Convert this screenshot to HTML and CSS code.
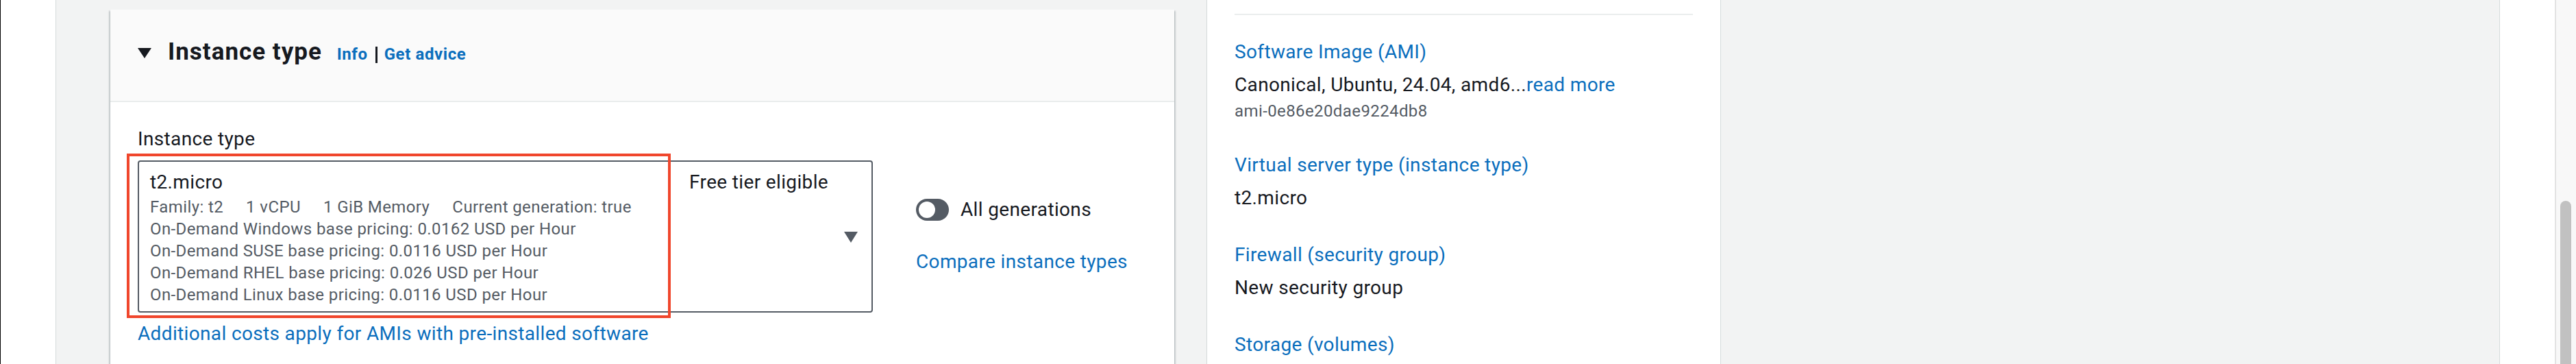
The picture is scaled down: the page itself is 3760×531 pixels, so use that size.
FILE: index.html
```html
<!DOCTYPE html>
<html lang="en">
<head>
    <meta charset="UTF-8">
    <title>Launch an instance - Instance type</title>
    <link rel="stylesheet" href="styles.css">
</head>
<body>
    <div class="frame">
        <aside class="nav-rail"></aside>

        <main class="main">
            <section class="card">
                <header class="card-header">
                    <svg class="caret" width="20" height="15" viewBox="0 0 20 15"><path d="M0 0 H20 L10 15 Z" fill="#16191f"/></svg>
                    <h2 class="card-title">Instance type <span class="title-links"><a class="info-link">Info</a><span class="sep"></span><a class="info-link">Get advice</a></span></h2>
                </header>

                <div class="card-body">
                    <div class="field-row">
                        <div class="field">
                            <label class="field-label">Instance type</label>
                            <div class="select-wrap">
                                <div class="select">
                                    <div class="option">
                                        <div class="option-top">
                                            <span class="option-name">t2.micro</span>
                                            <span class="option-tag">Free tier eligible</span>
                                        </div>
                                        <div class="option-desc option-tags">
                                            <span>Family: t2</span>
                                            <span>1 vCPU</span>
                                            <span>1 GiB Memory</span>
                                            <span>Current generation: true</span>
                                        </div>
                                        <div class="option-desc">On-Demand Windows base pricing: 0.0162 USD per Hour</div>
                                        <div class="option-desc">On-Demand SUSE base pricing: 0.0116 USD per Hour</div>
                                        <div class="option-desc">On-Demand RHEL base pricing: 0.026 USD per Hour</div>
                                        <div class="option-desc">On-Demand Linux base pricing: 0.0116 USD per Hour</div>
                                    </div>
                                    <svg class="select-arrow" width="20" height="16" viewBox="0 0 20 16"><path d="M0 0 H20 L10 16 Z" fill="#545b64"/></svg>
                                </div>
                                <div class="highlight-box"></div>
                            </div>
                            <a class="hint-link">Additional costs apply for AMIs with pre-installed software</a>
                        </div>

                        <div class="field-side">
                            <div class="toggle-row">
                                <span class="toggle"><span class="knob"></span></span>
                                <span>All generations</span>
                            </div>
                            <a class="side-link">Compare instance types</a>
                        </div>
                    </div>
                </div>
            </section>
        </main>

        <aside class="summary">
            <div class="summary-list">
                <div class="summary-item">
                    <a class="summary-title">Software Image (AMI)</a>
                    <div class="summary-value">Canonical, Ubuntu, 24.04, amd6...<a class="inline-link">read more</a></div>
                    <div class="summary-sub">ami-0e86e20dae9224db8</div>
                </div>
                <div class="summary-item">
                    <a class="summary-title">Virtual server type (instance type)</a>
                    <div class="summary-value">t2.micro</div>
                </div>
                <div class="summary-item">
                    <a class="summary-title">Firewall (security group)</a>
                    <div class="summary-value">New security group</div>
                </div>
                <div class="summary-item">
                    <a class="summary-title">Storage (volumes)</a>
                </div>
            </div>
        </aside>

        <div class="backdrop"></div>
        <aside class="tools-rail"></aside>
        <div class="scrollbar"><div class="thumb"></div></div>
    </div>
</body>
</html>
```

FILE: styles.css
```css
body {
    margin: 0;
    font-family: Roboto, 'Liberation Sans', sans-serif;
    color: #16191f;
    background: #f2f3f3;
    overflow: hidden;
}

a {
    color: #0a6ebd;
    text-decoration: none;
}

.frame {
    display: flex;
    height: 531px;
    overflow: hidden;
}

.nav-rail {
    width: 82px;
    flex-shrink: 0;
    box-sizing: border-box;
    background: #fff;
    border-left: 1px solid #000;
    border-right: 1px solid #d5dbdb;
}

.main {
    width: 1679px;
    flex-shrink: 0;
    box-sizing: border-box;
    padding: 14px 47px 0 79px;
    background: #f2f3f3;
}

.card {
    background: #fff;
    box-shadow: 0 2px 2px rgba(0,28,36,0.3), 2px 2px 2px rgba(0,28,36,0.15), -2px 2px 2px rgba(0,28,36,0.15);
    min-height: 600px;
}

.card-header {
    display: flex;
    align-items: center;
    gap: 24px;
    padding: 40px 40px 46px;
    background: #fafafa;
    border-bottom: 2px solid #eaeded;
}

.card-title {
    margin: 0;
    font-size: 35px;
    line-height: 44px;
    font-weight: 700;
    letter-spacing: 1px;
}

.title-links {
    margin-left: 12px;
    font-size: 24px;
    letter-spacing: 0.6px;
}

.info-link {
    font-weight: 700;
}

.sep {
    display: inline-block;
    width: 0;
    height: 24px;
    margin: 0 10px 0 11px;
    border-left: 3px solid #16191f;
    vertical-align: -5px;
}

.card-body {
    padding: 34px 40px 40px;
}

.field-row {
    display: flex;
}

.field {
    width: 1073px;
    flex-shrink: 0;
}

.field-label {
    display: block;
    font-size: 28px;
    line-height: 40px;
    letter-spacing: 0.35px;
    margin-bottom: 11px;
}

.select-wrap {
    position: relative;
}

.select {
    display: flex;
    align-items: center;
    border: 2px solid #545b64;
    border-radius: 4px;
    padding: 10px 20px 8px 16px;
}

.option {
    flex: 1;
}

.option-top {
    display: flex;
    justify-content: space-between;
    font-size: 28px;
    line-height: 40px;
    letter-spacing: 0.35px;
}

.option-desc {
    font-size: 24px;
    line-height: 32px;
    letter-spacing: 0.4px;
    color: #545b64;
}

.option-tags {
    display: flex;
    gap: 33px;
}

.select-arrow {
    margin-left: 23px;
    flex-shrink: 0;
}

/* screenshot annotation over the selected option */
.highlight-box {
    position: absolute;
    left: -16px;
    top: -10px;
    width: 794px;
    height: 240px;
    box-sizing: border-box;
    border: 4px solid #f0462c;
}

.hint-link {
    display: block;
    margin-top: 11px;
    font-size: 28px;
    line-height: 40px;
    letter-spacing: 0.35px;
}

.field-side {
    margin-left: 63px;
    padding-top: 103px;
    font-size: 28px;
    line-height: 40px;
    letter-spacing: 0.35px;
}

.toggle-row {
    display: flex;
    align-items: center;
    gap: 17px;
}

.toggle {
    display: flex;
    width: 48px;
    height: 32px;
    box-sizing: border-box;
    padding: 4px;
    border-radius: 16px;
    background: #545b64;
}

.knob {
    width: 24px;
    height: 24px;
    border-radius: 50%;
    background: #fff;
}

.side-link {
    display: block;
    margin-top: 36px;
}

.summary {
    width: 751px;
    flex-shrink: 0;
    box-sizing: border-box;
    padding: 20px 40px 0;
    background: #fff;
    border-left: 1px solid #d5dbdb;
    border-right: 1px solid #d5dbdb;
}

.summary-list {
    display: flex;
    flex-direction: column;
    gap: 43px;
    padding-top: 34px;
    border-top: 2px solid #eaeded;
}

.summary-item {
    display: flex;
    flex-direction: column;
}

.summary-title,
.summary-value {
    font-size: 28px;
    line-height: 40px;
    letter-spacing: 0.35px;
}

.summary-value {
    margin-top: 8px;
}

.summary-sub {
    margin-top: 2px;
    font-size: 24px;
    line-height: 32px;
    letter-spacing: 0.4px;
    color: #545b64;
}

.backdrop {
    flex: 1;
    background: #f2f3f3;
}

.tools-rail {
    width: 81px;
    flex-shrink: 0;
    box-sizing: border-box;
    background: #fff;
    border-left: 1px solid #d5dbdb;
}

.scrollbar {
    width: 31px;
    flex-shrink: 0;
    box-sizing: border-box;
    padding: 293px 0 0 6px;
    background: #f8f8f8;
    border-left: 2px solid #e3e3e3;
}

.thumb {
    width: 16px;
    height: 400px;
    border-radius: 8px;
    background: #c1c1c1;
}
```
